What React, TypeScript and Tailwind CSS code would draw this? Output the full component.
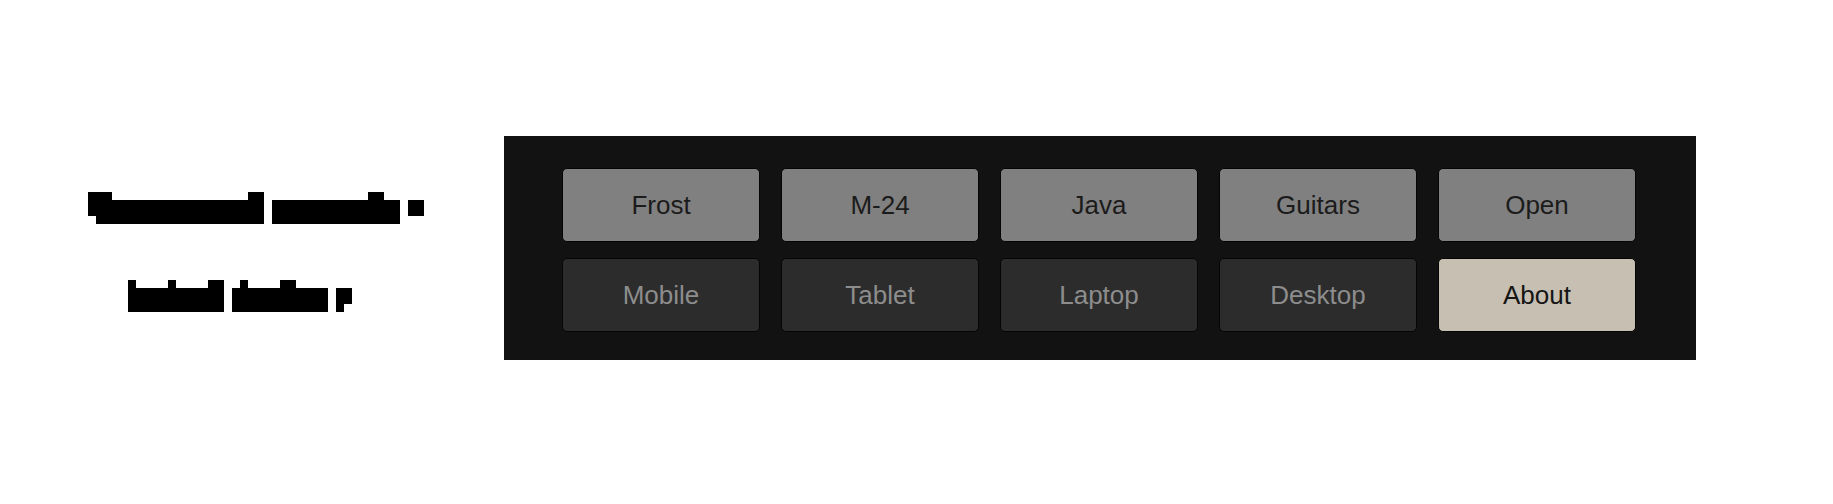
import React from "react";

const top = ["Frost", "M-24", "Java", "Guitars", "Open"];
const bottom = ["Mobile", "Tablet", "Laptop", "Desktop"];

function Line1() {
  return (
    <svg width="336" height="32" viewBox="0 0 336 32" aria-hidden="true">
      <g fill="#000">
        <rect x="0" y="0" width="24" height="8" />
        <rect x="160" y="0" width="16" height="8" />
        <rect x="0" y="8" width="176" height="16" />
        <rect x="8" y="24" width="168" height="8" />
        <rect x="184" y="8" width="128" height="24" />
        <rect x="280" y="0" width="16" height="8" />
        <rect x="320" y="8" width="16" height="16" />
      </g>
    </svg>
  );
}

function Line2() {
  return (
    <svg width="224" height="32" viewBox="0 0 224 32" aria-hidden="true">
      <g fill="#000">
        <rect x="0" y="8" width="96" height="24" />
        <rect x="0" y="0" width="8" height="8" />
        <rect x="40" y="0" width="8" height="8" />
        <rect x="80" y="0" width="16" height="8" />
        <rect x="104" y="8" width="96" height="24" />
        <rect x="112" y="0" width="8" height="8" />
        <rect x="152" y="0" width="16" height="8" />
        <rect x="208" y="8" width="16" height="16" />
        <rect x="208" y="24" width="8" height="8" />
      </g>
    </svg>
  );
}

export default function App() {
  return (
    <div
      className="w-[1833px] h-[504px] bg-white flex flex-row items-start pt-[136px]"
      style={{ fontFamily: '"Liberation Sans", Arial, sans-serif' }}
    >
      <div className="w-[504px] flex flex-col items-center pt-[56px]">
        <div className="ml-[8px]">
          <Line1 />
        </div>
        <div className="mt-[56px] ml-[-24px]">
          <Line2 />
        </div>
      </div>
      <div className="w-[1192px] h-[224px] bg-[#121212] pl-[58px] pt-[32px]">
        <div className="grid grid-cols-[repeat(5,198px)] gap-x-[21px] gap-y-[16px]">
          {top.map((t) => (
            <div
              key={t}
              className="h-[74px] rounded-[5px] border border-[#050505] bg-[#808080] text-[#1b1b1b] text-[26px] flex items-center justify-center"
            >
              {t}
            </div>
          ))}
          {bottom.map((t) => (
            <div
              key={t}
              className="h-[74px] rounded-[5px] border border-[#050505] bg-[#2c2c2c] text-[#8d8d8d] text-[26px] flex items-center justify-center"
            >
              {t}
            </div>
          ))}
          <div className="h-[74px] rounded-[5px] border border-[#050505] bg-[#c7bfb2] text-[#151515] text-[26px] flex items-center justify-center">
            About
          </div>
        </div>
      </div>
    </div>
  );
}
